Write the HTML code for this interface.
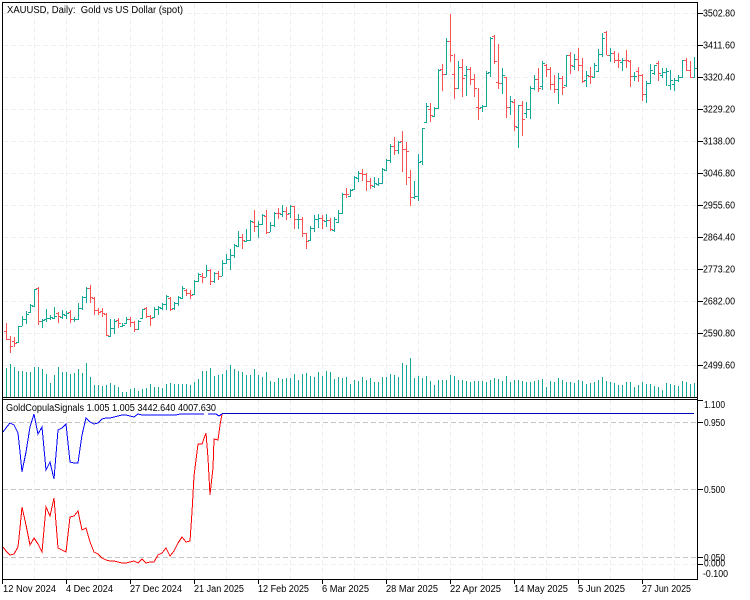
<!DOCTYPE html>
<html><head><meta charset="utf-8"><title>XAUUSD Daily</title>
<style>
html,body{margin:0;padding:0;background:#fff;width:750px;height:600px;overflow:hidden}
svg{display:block}
text{font-family:"Liberation Sans",sans-serif;font-size:10px;fill:#000;white-space:pre}
</style></head><body>
<svg width="750" height="600" viewBox="0 0 750 600" xmlns="http://www.w3.org/2000/svg">
<rect width="750" height="600" fill="#fff"/>
<g fill="none" stroke-width="1" shape-rendering="crispEdges">
<path stroke="#efefef" stroke-dasharray="5 3" d="M3 13.5H697M3 45.5H697M3 77.5H697M3 109.5H697M3 141.5H697M3 173.5H697M3 205.5H697M3 237.5H697M3 269.5H697M3 301.5H697M3 333.5H697M3 365.5H697M3 564.5H697"/>
<path stroke="#efefef" stroke-dasharray="5 3" d="M34.5 3V397M66.5 3V397M98.5 3V397M130.5 3V397M162.5 3V397M194.5 3V397M226.5 3V397M258.5 3V397M290.5 3V397M322.5 3V397M354.5 3V397M386.5 3V397M418.5 3V397M450.5 3V397M482.5 3V397M514.5 3V397M546.5 3V397M578.5 3V397M610.5 3V397M642.5 3V397M674.5 3V397M34.5 400V579M66.5 400V579M98.5 400V579M130.5 400V579M162.5 400V579M194.5 400V579M226.5 400V579M258.5 400V579M290.5 400V579M322.5 400V579M354.5 400V579M386.5 400V579M418.5 400V579M450.5 400V579M482.5 400V579M514.5 400V579M546.5 400V579M578.5 400V579M610.5 400V579M642.5 400V579M674.5 400V579"/>
<path stroke="#c4c4c4" stroke-dasharray="5 3" d="M3 422.5H697M3 489.5H697M3 557.5H697"/>
<path stroke="#14a898" d="M6.5 368V397M10.5 364V397M14.5 367V397M18.5 371V397M22.5 371V397M26.5 372V397M30.5 372V397M34.5 367V397M38.5 367V397M42.5 369V397M46.5 374V397M50.5 383V397M54.5 375V397M58.5 367V397M62.5 372V397M66.5 372V397M70.5 374V397M74.5 373V397M78.5 369V397M82.5 373V397M86.5 363V397M90.5 377V397M94.5 385V397M98.5 385V397M102.5 386V397M106.5 385V397M110.5 383V397M114.5 385V397M118.5 387V397M122.5 392V397M126.5 392V397M130.5 389V397M134.5 388V397M138.5 391V397M142.5 389V397M146.5 388V397M150.5 384V397M154.5 387V397M158.5 387V397M162.5 388V397M166.5 384V397M170.5 383V397M174.5 384V397M178.5 384V397M182.5 384V397M186.5 384V397M190.5 385V397M194.5 382V397M198.5 379V397M202.5 371V397M206.5 371V397M210.5 368V397M214.5 376V397M218.5 375V397M222.5 374V397M226.5 370V397M230.5 365V397M234.5 369V397M238.5 371V397M242.5 372V397M246.5 375V397M250.5 375V397M254.5 369V397M258.5 375V397M262.5 377V397M266.5 372V397M270.5 381V397M274.5 382V397M278.5 378V397M282.5 379V397M286.5 378V397M290.5 378V397M294.5 374V397M298.5 380V397M302.5 374V397M306.5 373V397M310.5 376V397M314.5 377V397M318.5 372V397M322.5 376V397M326.5 371V397M330.5 372V397M334.5 379V397M338.5 377V397M342.5 378V397M346.5 377V397M350.5 384V397M354.5 380V397M358.5 381V397M362.5 377V397M366.5 380V397M370.5 378V397M374.5 382V397M378.5 382V397M382.5 377V397M386.5 377V397M390.5 374V397M394.5 375V397M398.5 377V397M402.5 363V397M406.5 365V397M410.5 358V397M414.5 378V397M418.5 376V397M422.5 378V397M426.5 376V397M430.5 381V397M434.5 385V397M438.5 380V397M442.5 380V397M446.5 380V397M450.5 375V397M454.5 376V397M458.5 380V397M462.5 380V397M466.5 381V397M470.5 382V397M474.5 381V397M478.5 381V397M482.5 381V397M486.5 382V397M490.5 380V397M494.5 378V397M498.5 379V397M502.5 381V397M506.5 376V397M510.5 382V397M514.5 380V397M518.5 380V397M522.5 381V397M526.5 382V397M530.5 382V397M534.5 381V397M538.5 380V397M542.5 379V397M546.5 387V397M550.5 381V397M554.5 382V397M558.5 378V397M562.5 380V397M566.5 382V397M570.5 382V397M574.5 383V397M578.5 380V397M582.5 381V397M586.5 384V397M590.5 383V397M594.5 382V397M598.5 380V397M602.5 377V397M606.5 381V397M610.5 382V397M614.5 383V397M618.5 385V397M622.5 385V397M626.5 382V397M630.5 382V397M634.5 387V397M638.5 385V397M642.5 382V397M646.5 384V397M650.5 384V397M654.5 386V397M658.5 387V397M662.5 390V397M666.5 383V397M670.5 384V397M674.5 385V397M678.5 386V397M682.5 381V397M686.5 382V397M690.5 384V397M694.5 383V397"/>
<path stroke="#14a898" d="M18.5 326V343M16 342.5h2M19 326.5h2M22.5 316V326M20 326.5h2M23 319.5h2M26.5 311V324M24 319.5h2M27 314.5h2M30.5 304V313M28 312.5h2M31 305.5h2M34.5 289V307M32 306.5h2M35 289.5h2M42.5 319V328M40 321.5h2M43 320.5h2M46.5 309V322M44 319.5h2M47 318.5h2M50.5 315V320M48 318.5h2M51 317.5h2M54.5 307V319M52 318.5h2M55 316.5h2M62.5 310V319M60 317.5h2M63 314.5h2M66.5 311V319M64 315.5h2M67 313.5h2M74.5 317V322M72 319.5h2M75 319.5h2M78.5 303V320M76 319.5h2M79 308.5h2M82.5 296V310M80 308.5h2M83 297.5h2M86.5 287V303M84 297.5h2M87 288.5h2M110.5 319V337M108 336.5h2M111 328.5h2M114.5 319V334M112 328.5h2M115 321.5h2M122.5 323V327M120 326.5h2M123 325.5h2M126.5 317V324M124 323.5h2M127 319.5h2M138.5 320V330M136 329.5h2M139 321.5h2M142.5 309V319M140 318.5h2M143 309.5h2M154.5 307V318M152 317.5h2M155 309.5h2M158.5 306V315M156 309.5h2M159 307.5h2M162.5 303V310M160 308.5h2M163 304.5h2M166.5 295V310M164 304.5h2M167 296.5h2M174.5 302V310M172 308.5h2M175 303.5h2M178.5 296V306M176 303.5h2M179 297.5h2M182.5 286V299M180 298.5h2M183 288.5h2M194.5 280V295M192 294.5h2M195 281.5h2M198.5 273V282M196 281.5h2M199 274.5h2M206.5 265V277M204 277.5h2M207 270.5h2M214.5 272V283M212 281.5h2M215 273.5h2M222.5 260V276M220 276.5h2M223 263.5h2M226.5 254V264M224 263.5h2M227 259.5h2M230.5 249V270M228 259.5h2M231 255.5h2M234.5 244V258M232 255.5h2M235 245.5h2M238.5 231V247M236 246.5h2M239 237.5h2M246.5 229V242M244 241.5h2M247 240.5h2M250.5 220V241M248 240.5h2M251 221.5h2M258.5 221V238M256 226.5h2M259 224.5h2M262.5 214V225M260 224.5h2M263 215.5h2M270.5 222V232M268 232.5h2M271 225.5h2M274.5 212V227M272 225.5h2M275 213.5h2M282.5 205V217M280 214.5h2M283 211.5h2M290.5 205V218M288 213.5h2M291 206.5h2M298.5 214V229M296 219.5h2M299 219.5h2M310.5 226V241M308 240.5h2M311 228.5h2M314.5 215V232M312 228.5h2M315 219.5h2M318.5 214V228M316 219.5h2M319 218.5h2M326.5 214V227M324 221.5h2M327 220.5h2M334.5 217V232M332 230.5h2M335 219.5h2M338.5 210V223M336 222.5h2M339 213.5h2M342.5 193V214M340 213.5h2M343 194.5h2M350.5 189V197M348 196.5h2M351 190.5h2M354.5 176V190M352 189.5h2M355 177.5h2M358.5 171V182M356 178.5h2M359 173.5h2M374.5 177V188M372 186.5h2M375 183.5h2M378.5 178V186M376 184.5h2M379 183.5h2M382.5 168V184M380 183.5h2M383 169.5h2M386.5 159V171M384 170.5h2M387 160.5h2M390.5 144V163M388 160.5h2M391 146.5h2M398.5 141V154M396 150.5h2M399 142.5h2M414.5 181V199M412 197.5h2M415 196.5h2M418.5 154V201M416 196.5h2M419 162.5h2M422.5 128V165M420 161.5h2M423 128.5h2M426.5 103V123M424 122.5h2M427 106.5h2M434.5 107V117M432 116.5h2M435 108.5h2M438.5 69V109M436 108.5h2M439 70.5h2M446.5 38V75M444 74.5h2M447 41.5h2M458.5 61V89M456 88.5h2M459 67.5h2M466.5 66V96M464 75.5h2M467 69.5h2M482.5 105V112M480 107.5h2M483 106.5h2M486.5 71V107M484 106.5h2M487 73.5h2M490.5 37V77M488 72.5h2M491 38.5h2M502.5 68V94M500 83.5h2M503 75.5h2M510.5 96V115M508 107.5h2M511 101.5h2M518.5 105V148M516 127.5h2M519 105.5h2M526.5 102V118M524 113.5h2M527 109.5h2M530.5 86V119M528 109.5h2M531 88.5h2M534.5 75V90M532 88.5h2M535 79.5h2M542.5 61V90M540 86.5h2M543 63.5h2M558.5 73V104M556 89.5h2M559 78.5h2M566.5 55V87M564 85.5h2M567 55.5h2M574.5 54V70M572 66.5h2M575 59.5h2M586.5 71V87M584 80.5h2M587 75.5h2M594.5 63V78M592 77.5h2M595 65.5h2M598.5 49V72M596 71.5h2M599 54.5h2M602.5 33V57M600 54.5h2M603 38.5h2M610.5 48V62M608 55.5h2M611 53.5h2M622.5 58V71M620 62.5h2M623 60.5h2M634.5 72V81M632 76.5h2M635 76.5h2M646.5 81V103M644 94.5h2M647 83.5h2M650.5 64V84M648 83.5h2M651 70.5h2M654.5 65V75M652 73.5h2M655 65.5h2M662.5 68V78M660 75.5h2M663 72.5h2M666.5 68V86M664 72.5h2M667 71.5h2M670.5 70V90M668 85.5h2M671 80.5h2M674.5 78V91M672 84.5h2M675 80.5h2M678.5 75V82M676 80.5h2M679 77.5h2M682.5 60V78M680 77.5h2M683 60.5h2M694.5 57V78M692 77.5h2M695 68.5h2"/>
<path stroke="#f95252" d="M6.5 323V340M4 331.5h2M7 339.5h2M10.5 336V353M8 339.5h2M11 346.5h2M14.5 337V347M12 341.5h2M15 343.5h2M38.5 287V325M36 288.5h2M39 321.5h2M58.5 312V323M56 313.5h2M59 316.5h2M70.5 310V323M68 312.5h2M71 319.5h2M90.5 285V303M88 288.5h2M91 297.5h2M94.5 297V315M92 298.5h2M95 310.5h2M98.5 308V315M96 310.5h2M99 312.5h2M102.5 308V317M100 311.5h2M103 313.5h2M106.5 313V336M104 314.5h2M107 335.5h2M118.5 318V328M116 320.5h2M119 323.5h2M130.5 317V327M128 319.5h2M131 322.5h2M134.5 321V332M132 322.5h2M135 329.5h2M146.5 307V318M144 308.5h2M147 316.5h2M150.5 315V326M148 316.5h2M151 318.5h2M170.5 297V311M168 298.5h2M171 309.5h2M186.5 289V296M184 290.5h2M187 293.5h2M190.5 290V299M188 293.5h2M191 295.5h2M202.5 273V283M200 276.5h2M203 277.5h2M210.5 269V285M208 270.5h2M211 281.5h2M218.5 271V280M216 273.5h2M219 276.5h2M242.5 234V249M240 237.5h2M243 240.5h2M254.5 210V232M252 222.5h2M255 226.5h2M266.5 210V234M264 216.5h2M267 232.5h2M278.5 208V219M276 213.5h2M279 213.5h2M286.5 207V220M284 211.5h2M287 214.5h2M294.5 206V229M292 206.5h2M295 219.5h2M302.5 217V237M300 219.5h2M303 233.5h2M306.5 233V249M304 233.5h2M307 241.5h2M322.5 215V229M320 218.5h2M323 220.5h2M330.5 218V231M328 220.5h2M331 229.5h2M346.5 188V198M344 194.5h2M347 194.5h2M362.5 169V181M360 173.5h2M363 174.5h2M366.5 173V191M364 174.5h2M367 181.5h2M370.5 178V189M368 181.5h2M371 185.5h2M394.5 137V155M392 146.5h2M395 150.5h2M402.5 131V172M400 141.5h2M403 149.5h2M406.5 142V185M404 149.5h2M407 151.5h2M410.5 170V206M408 177.5h2M411 197.5h2M430.5 103V122M428 109.5h2M431 115.5h2M442.5 64V91M440 69.5h2M443 74.5h2M450.5 14V62M448 41.5h2M451 55.5h2M454.5 54V99M452 74.5h2M455 88.5h2M462.5 59V97M460 67.5h2M463 78.5h2M470.5 67V85M468 69.5h2M471 79.5h2M474.5 74V97M472 79.5h2M475 88.5h2M478.5 88V120M476 107.5h2M479 108.5h2M494.5 35V64M492 36.5h2M495 61.5h2M498.5 44V89M496 82.5h2M499 83.5h2M506.5 77V118M504 77.5h2M507 107.5h2M514.5 99V131M512 102.5h2M515 126.5h2M522.5 101V136M520 105.5h2M523 119.5h2M538.5 68V92M536 79.5h2M539 88.5h2M546.5 64V77M544 65.5h2M547 69.5h2M550.5 67V90M548 69.5h2M551 84.5h2M554.5 75V93M552 84.5h2M555 89.5h2M562.5 76V95M560 78.5h2M563 87.5h2M570.5 52V74M568 55.5h2M571 65.5h2M578.5 48V71M576 59.5h2M579 65.5h2M582.5 58V83M580 65.5h2M583 81.5h2M590.5 67V84M588 76.5h2M591 76.5h2M606.5 31V55M604 32.5h2M607 55.5h2M614.5 51V63M612 53.5h2M615 60.5h2M618.5 53V68M616 60.5h2M619 60.5h2M626.5 50V68M624 60.5h2M627 60.5h2M630.5 60V87M628 61.5h2M631 76.5h2M638.5 67V82M636 71.5h2M639 75.5h2M642.5 74V101M640 75.5h2M643 94.5h2M658.5 61V81M656 63.5h2M659 73.5h2M686.5 58V71M684 60.5h2M687 70.5h2M690.5 61V78M688 70.5h2M691 77.5h2"/>
<polyline stroke="#ff0000" points="3,547 6,551 10,555 14,554 18,547 20,528 22,507 26,525 30,545 34,538 38,544 42,552 46,507 50,516 54,498 58,548 62,550 66,552 70,517 74,516 78,511 82,530 86,528 90,542 94,552 98,554 102,558 106,560 110,561 114,561 118,562 122,563 126,563 130,562 134,561 138,563 142,559 146,563 150,562 154,562 158,555 162,553 166,548 170,556 174,551 178,543 182,537 186,542 190,541 192,512 194,476 198,444 202,444 206,433 208,458 210,495 213,468 214,439 218,440 220,425 222,414"/>
<polyline stroke="#0000ff" points="3,432 6,428 10,423 14,425 18,433 20,452 22,472 26,452 30,427 34,414 38,434 42,427 46,470 50,462 54,479 58,430 62,428 66,424 70,462 74,463 78,463 82,435 86,418 90,422 94,424 98,423 102,419 106,418 110,418 114,417 118,416 122,415 126,415 130,416 134,417 138,414 142,415 146,415 172,415 176,415 180,414 204,414"/>
<polyline stroke="#0000ff" points="208,414 216,414 219,416 222,414"/>
<path stroke="#0000c0" d="M222 413.5H694"/>
<path stroke="#000" d="M2 2.5H698M2.5 2V580M697.5 2V580M2 397.5H698M2 399.5H698M2 579.5H698"/>
<path stroke="#000" d="M698 13.5h5M698 45.5h5M698 77.5h5M698 109.5h5M698 141.5h5M698 173.5h5M698 205.5h5M698 237.5h5M698 269.5h5M698 301.5h5M698 333.5h5M698 365.5h5M698 400.5h5M698 422.5h5M698 489.5h5M698 557.5h5M698 564.5h5M2.5 580v4M66.5 580v4M130.5 580v4M194.5 580v4M258.5 580v4M322.5 580v4M386.5 580v4M450.5 580v4M514.5 580v4M578.5 580v4M642.5 580v4"/>
</g>
<text x="7" y="13" textLength="176" lengthAdjust="spacingAndGlyphs">XAUUSD, Daily:  Gold vs US Dollar (spot)</text>
<text x="6" y="411" textLength="210" lengthAdjust="spacingAndGlyphs">GoldCopulaSignals 1.005 1.005 3442.640 4007.630</text>
<g>
<text x="703" y="16.5" textLength="32" lengthAdjust="spacingAndGlyphs">3502.80</text>
<text x="703" y="48.5" textLength="32" lengthAdjust="spacingAndGlyphs">3411.60</text>
<text x="703" y="80.5" textLength="32" lengthAdjust="spacingAndGlyphs">3320.40</text>
<text x="703" y="112.5" textLength="32" lengthAdjust="spacingAndGlyphs">3229.20</text>
<text x="703" y="144.5" textLength="32" lengthAdjust="spacingAndGlyphs">3138.00</text>
<text x="703" y="176.5" textLength="32" lengthAdjust="spacingAndGlyphs">3046.80</text>
<text x="703" y="208.5" textLength="32" lengthAdjust="spacingAndGlyphs">2955.60</text>
<text x="703" y="240.5" textLength="32" lengthAdjust="spacingAndGlyphs">2864.40</text>
<text x="703" y="272.5" textLength="32" lengthAdjust="spacingAndGlyphs">2773.20</text>
<text x="703" y="304.5" textLength="32" lengthAdjust="spacingAndGlyphs">2682.00</text>
<text x="703" y="336.5" textLength="32" lengthAdjust="spacingAndGlyphs">2590.80</text>
<text x="703" y="368.5" textLength="32" lengthAdjust="spacingAndGlyphs">2499.60</text>
<text x="704" y="408" textLength="21" lengthAdjust="spacingAndGlyphs">1.100</text>
<text x="704" y="426" textLength="21" lengthAdjust="spacingAndGlyphs">0.950</text>
<text x="704" y="493" textLength="21" lengthAdjust="spacingAndGlyphs">0.500</text>
<text x="704" y="561" textLength="21" lengthAdjust="spacingAndGlyphs">0.050</text>
<text x="704" y="566.5" textLength="21" lengthAdjust="spacingAndGlyphs">0.000</text>
<text x="703" y="577" textLength="25" lengthAdjust="spacingAndGlyphs">-0.100</text>
</g>
<g>
<text x="3" y="592" textLength="53" lengthAdjust="spacingAndGlyphs">12 Nov 2024</text>
<text x="66" y="592" textLength="47" lengthAdjust="spacingAndGlyphs">4 Dec 2024</text>
<text x="130" y="592" textLength="52" lengthAdjust="spacingAndGlyphs">27 Dec 2024</text>
<text x="194" y="592" textLength="50" lengthAdjust="spacingAndGlyphs">21 Jan 2025</text>
<text x="258" y="592" textLength="51" lengthAdjust="spacingAndGlyphs">12 Feb 2025</text>
<text x="322" y="592" textLength="47" lengthAdjust="spacingAndGlyphs">6 Mar 2025</text>
<text x="386" y="592" textLength="52" lengthAdjust="spacingAndGlyphs">28 Mar 2025</text>
<text x="450" y="592" textLength="51" lengthAdjust="spacingAndGlyphs">22 Apr 2025</text>
<text x="514" y="592" textLength="54" lengthAdjust="spacingAndGlyphs">14 May 2025</text>
<text x="578" y="592" textLength="47" lengthAdjust="spacingAndGlyphs">5 Jun 2025</text>
<text x="642" y="592" textLength="49" lengthAdjust="spacingAndGlyphs">27 Jun 2025</text>
</g>
</svg>
</body></html>
